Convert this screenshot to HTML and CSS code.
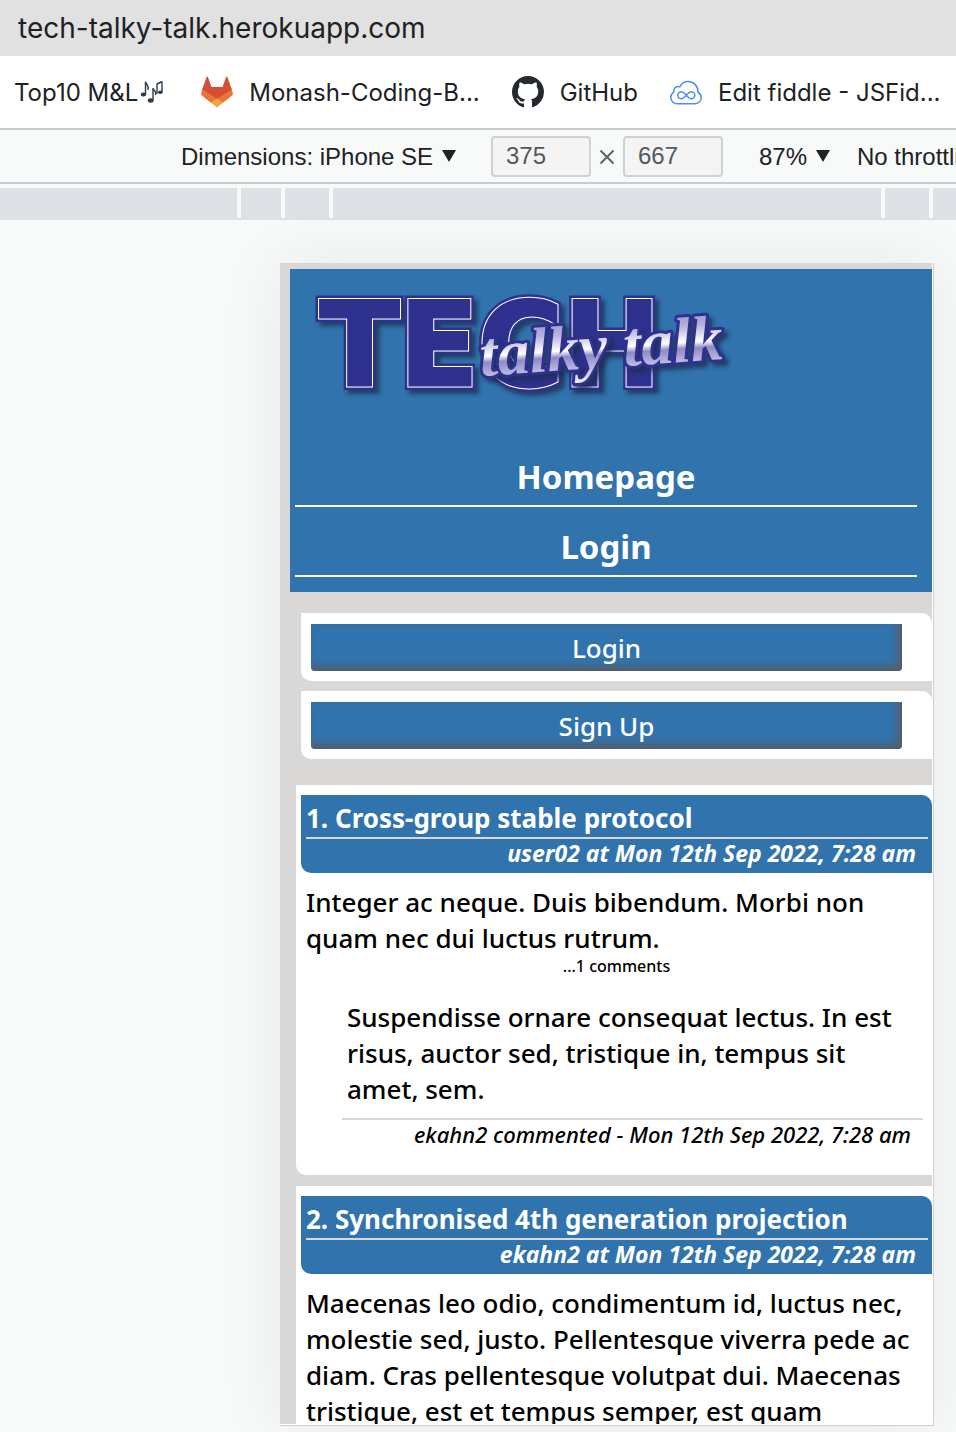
FILE: index.html
```html
<!DOCTYPE html>
<html lang="en">
<head>
<meta charset="utf-8">
<title>Tech Talky Talk</title>
<link rel="stylesheet" href="styles.css">
</head>
<body>
<div class="address-bar">
  <input class="address" type="text" value="tech-talky-talk.herokuapp.com" aria-label="Address">
</div>

<nav class="bookmarks" aria-label="Bookmarks">
  <a class="bookmark bookmark-music" href="#">Top10 M&amp;L<svg class="notes" viewBox="0 0 24 24" role="img" aria-label="Music notes">
      <g fill="none" stroke="#2c3d49" stroke-width="1.4"><path d="M5.500 14V1.500C6 5 9.500 5 8 10M13 20V8C13.500 11 17 11 15.500 15M22 12V1.500M17 14V4L22 1.500"/></g>
      <g fill="#2c3d49"><ellipse cx="3.500" cy="14.500" rx="2.700" ry="2.100"/><ellipse cx="10.700" cy="20.500" rx="2.900" ry="2.200"/><ellipse cx="20.300" cy="12.300" rx="2.300" ry="1.800"/></g>
    </svg></a>
  <a class="bookmark" href="#">
    <svg class="mark" viewBox="0 0 32 32" aria-hidden="true">
      <path fill="#eb7338" d="M1.800 12 0.200 17c-.3.900 0 2 .8 2.600L10 26.800 16 22l6 4.800 9-7.200c.8-.6 1.100-1.700.8-2.600L30.200 12z"/>
      <path fill="#d35036" d="M1.200 13.500 5.500 1.200c.3-.8 1.200-.8 1.500 0L10.500 11h11L25 1.200c.3-.8 1.200-.8 1.500 0L30.800 13.500 16 23z"/>
      <path fill="#eb7338" d="M1 13.800 11 19.500 16 23.500 21 19.500 31 13.800 28 22 16 30 4 22z"/>
      <path fill="#f0a541" d="M9.800 26.600 16 22.500l6.200 4.100L16 31.400z"/>
    </svg>Monash-Coding-B...</a>
  <a class="bookmark" href="#">
    <svg class="mark" viewBox="0 0 16 16" aria-hidden="true"><path fill="#24292f" d="M8 0C3.580 0 0 3.580 0 8c0 3.540 2.290 6.530 5.470 7.590.4.070.55-.17.55-.38 0-.19-.01-.82-.01-1.490-2.010.37-2.530-.49-2.690-.94-.09-.23-.48-.94-.82-1.130-.28-.15-.68-.52-.01-.53.63-.01 1.080.58 1.230.82.72 1.210 1.870.87 2.330.66.07-.52.28-.87.51-1.070-1.780-.2-3.640-.89-3.640-3.950 0-.87.31-1.590.82-2.150-.08-.2-.36-1.020.08-2.120 0 0 .67-.21 2.200.82.64-.18 1.320-.27 2-.27s1.360.09 2 .27c1.530-1.040 2.200-.82 2.200-.82.44 1.100.16 1.920.08 2.120.51.56.82 1.270.82 2.150 0 3.070-1.870 3.750-3.650 3.950.29.25.54.73.54 1.480 0 1.070-.01 1.930-.01 2.200 0 .21.15.46.55.38A8.010 8.010 0 0 0 16 8c0-4.420-3.580-8-8-8z"/></svg>GitHub</a>
  <a class="bookmark" href="#">
    <svg class="mark" viewBox="0 0 32 32" fill="none" stroke="#4a90f0" stroke-width="1.500" aria-hidden="true">
      <path d="M7.500 27.800C3.800 27.800.8 25 .8 21.500c0-2.400 1.200-4.300 3-5.300-.8-3.900 2.300-6.500 6-5.300C11.500 7.500 14.600 5.500 18 5.500c5.500 0 10 4.300 10 10v1c2 1 3.200 2.900 3.200 5.200 0 3.400-2.800 6.100-6.400 6.100z"/>
      <path d="M16.300 19.300c-2-2.200-3.200-3.500-5-3.500a3.500 3.500 0 0 0 0 7c1.800 0 3-1.300 5-3.500s3.200-3.500 5-3.500a3.500 3.500 0 0 1 0 7c-1.800 0-3-1.300-5-3.500z"/>
    </svg>Edit fiddle - JSFid...</a>
</nav>

<div class="toolbar">
  <span class="picker">
    <select aria-label="Device"><option>Dimensions: iPhone SE</option></select>
    <svg class="arrow" viewBox="0 0 14 12" aria-hidden="true"><path d="M0 0h14L7 12z"/></svg>
  </span>
  <span class="size">
    <input type="text" value="375" aria-label="Width">
    <svg class="times" viewBox="0 0 16 16" aria-hidden="true"><path d="M1.500 2.500l13 13M14.500 2.500l-13 13"/></svg>
    <input type="text" value="667" aria-label="Height">
  </span>
  <span class="picker">
    <select aria-label="Zoom"><option>87%</option></select>
    <svg class="arrow" viewBox="0 0 14 12" aria-hidden="true"><path d="M0 0h14L7 12z"/></svg>
  </span>
  <select class="throttle" aria-label="Throttling"><option>No throttling</option></select>
</div>

<div class="ruler" aria-hidden="true">
  <i class="wide-left"></i><i class="step-small"></i><i class="step"></i><i class="middle"></i><i class="step"></i><i class="rest"></i>
</div>

<div class="canvas">
  <div class="device">
    <div class="screen">
      <header class="site-header">
        <svg class="logo" viewBox="0 0 430 120" role="img" aria-label="Tech Talky Talk">
          <defs>
            <linearGradient id="chrome" x1="0" y1="0" x2="0" y2="1">
              <stop offset="0" stop-color="#8d87c4"/><stop offset=".3" stop-color="#b5b1dc"/>
              <stop offset=".53" stop-color="#fff"/><stop offset=".62" stop-color="#8f89c6"/>
              <stop offset="1" stop-color="#f1f0fa"/>
            </linearGradient>
            <filter id="drop" x="-10%" y="-20%" width="120%" height="150%">
              <feDropShadow dx="4" dy="4" stdDeviation="2" flood-color="#1c2f50" flood-opacity=".75"/>
            </filter>
            <text id="tech" x="9" y="101">TECH</text>
            <text id="talky" x="170" y="92" transform="rotate(-4 170 92)">talky talk</text>
          </defs>
          <g class="block" filter="url(#drop)">
            <use href="#tech" class="block-edge"/>
            <use href="#tech" class="block-line"/>
            <use href="#tech" class="block-face"/>
          </g>
          <g class="script" filter="url(#drop)">
            <use href="#talky" class="script-edge"/>
            <use href="#talky" class="script-face"/>
          </g>
        </svg>
        <nav class="site-nav">
          <a href="#">Homepage</a>
          <a href="#">Login</a>
        </nav>
      </header>

      <div class="actions">
        <div class="action"><button type="button">Login</button></div>
        <div class="action"><button type="button">Sign Up</button></div>
      </div>

      <main class="posts">
        <article class="post">
          <header class="post-head">
            <h2>1. Cross-group stable protocol</h2>
            <p>user02 at Mon 12th Sep 2022, 7:28 am</p>
          </header>
          <p class="post-text">Integer ac neque. Duis bibendum. Morbi non<br>quam nec dui luctus rutrum.</p>
          <p class="count">...1 comments</p>
          <section class="comment">
            <p class="comment-text">Suspendisse ornare consequat lectus. In est<br>risus, auctor sed, tristique in, tempus sit<br>amet, sem.</p>
            <p class="comment-meta">ekahn2 commented - Mon 12th Sep 2022, 7:28 am</p>
          </section>
        </article>
        <article class="post">
          <header class="post-head">
            <h2>2. Synchronised 4th generation projection</h2>
            <p>ekahn2 at Mon 12th Sep 2022, 7:28 am</p>
          </header>
          <p class="post-text">Maecenas leo odio, condimentum id, luctus nec,<br>molestie sed, justo. Pellentesque viverra pede ac<br>diam. Cras pellentesque volutpat dui. Maecenas<br>tristique, est et tempus semper, est quam</p>
        </article>
      </main>
    </div>
  </div>
</div>
</body>
</html>
```
FILE: styles.css
```css
* { box-sizing: border-box; }

body {
  margin: 0;
  height: 100vh;
  display: flex;
  flex-direction: column;
  overflow: hidden;
  background: #f8faf9;
  color: #202124;
  font-family: "Noto Sans", sans-serif;
}

h2, p { margin: 0; }
a { color: inherit; text-decoration: none; }
svg { display: block; flex: none; }

.address-bar { flex: none; height: 56px; padding: 0 18px; background: #e1e1e1; }
.address {
  width: 100%;
  height: 56px;
  padding: 0;
  border: 0;
  background: none;
  color: #202124;
  font: 28px Inter, sans-serif;
}

.bookmarks {
  flex: none;
  display: flex;
  align-items: center;
  gap: 32px;
  height: 74px;
  padding-left: 14px;
  overflow: hidden;
  background: #fff;
  border-bottom: 2px solid #c9cccf;
  font: 24px Inter, sans-serif;
  white-space: nowrap;
}
.bookmark { display: flex; align-items: center; gap: 16px; }
.bookmark-music { gap: 2px; margin-right: 5px; }
.mark { width: 32px; height: 32px; }
.notes { width: 24px; height: 24px; }

.toolbar {
  flex: none;
  display: flex;
  align-items: center;
  height: 54px;
  padding-left: 181px;
  overflow: hidden;
  border-bottom: 2px solid #c9cccf;
  white-space: nowrap;
}
.toolbar select, .toolbar input { font: 24px "Liberation Sans", sans-serif; }
.toolbar select {
  appearance: none;
  flex: none;
  padding: 0;
  border: 0;
  background: none;
  color: #202124;
}
.toolbar input {
  width: 100px;
  height: 41px;
  padding: 0 13px;
  border: 2px solid #cfd2d1;
  border-radius: 4px;
  background: #f4f4f4;
  color: #55585a;
}
.picker { display: flex; flex: none; align-items: center; gap: 8px; margin-right: 35px; }
.picker + .throttle { margin-left: -8px; }
.arrow { width: 14px; height: 12px; fill: #202124; }
.size { display: flex; flex: none; align-items: center; gap: 8px; margin-right: 36px; }
.times { width: 16px; height: 16px; overflow: visible; stroke: #5f6368; stroke-width: 2; }

.ruler {
  flex: none;
  display: flex;
  gap: 4px;
  height: 32px;
  margin-top: 4px;
  border-bottom: 2px solid #dfe0e5;
}
.ruler i { flex: none; background: #dfe0e5; }
.wide-left { width: 237px; }
.step-small { width: 40px; }
.step { width: 44px; }
.middle { width: 548px; }
.ruler .rest { flex: 1; }

.canvas {
  flex: 1;
  display: flex;
  min-height: 0;
  padding: 43px 22px 6px 280px;
}
.device {
  flex: 1;
  min-width: 0;
  overflow: hidden;
  padding: 0 1px 1px 0;
  background: #fff;
  border: solid #d0d1d3;
  border-width: 0 1px 1px 0;
  box-shadow: 0 0 60px rgba(0, 0, 0, .07);
}
.screen { height: 100%; overflow: hidden; padding: 6px 0 0 10px; background: #d9d8d6; color: #000; }

.site-header { padding: 15px 15px 15px 5px; background: #3173ad; }
.logo { width: 430px; height: 120px; margin-left: 16px; }
.block { font: bold 116px "DejaVu Sans", sans-serif; }
.script { font: italic bold 64px "Liberation Serif", serif; }
.block-edge { fill: #2e308e; stroke: #2e308e; stroke-width: 10px; }
.block-line { fill: #fff; stroke: #fff; stroke-width: 5px; }
.block-face { fill: #2e308e; stroke: #2e308e; stroke-width: 3px; }
.script-edge { fill: #2e308e; stroke: #2e308e; stroke-width: 6px; stroke-linejoin: round; }
.script-face { fill: url(#chrome); }

.site-nav { margin-top: 33px; }
.site-nav a {
  display: block;
  height: 70px;
  padding-top: 12px;
  border-bottom: 2px solid #fff;
  color: #fff;
  font-size: 33px;
  font-weight: 700;
  line-height: 56px;
  text-align: center;
}

.actions { display: grid; gap: 10px; margin: 21px 0 26px 11px; }
.action { padding: 11px 30px 10px 10px; background: #fff; border-radius: 0 10px 0 10px; }
.action button {
  display: block;
  width: 100%;
  height: 47px;
  padding: 0;
  border: 0;
  border-radius: 0 0 4px 4px;
  background: #3173ad;
  box-shadow: inset -4px -4px 8px #5b5b5f;
  color: #fff;
  font: 500 26px/46px "Noto Sans", sans-serif;
}

.posts { display: grid; gap: 11px; padding-left: 6px; }
.post { padding: 10px 0 27px 5px; background: #fff; border-radius: 0 0 0 10px; }
.post-head {
  height: 78px;
  padding: 0 4px 0 5px;
  background: #3173ad;
  border-radius: 0 10px 0 10px;
  color: #fff;
}
.post-head h2 {
  height: 44px;
  border-bottom: 2px solid #d9d8d6;
  font-size: 26px;
  line-height: 46px;
  white-space: nowrap;
}
.post-head p {
  padding-right: 12px;
  font-size: 23px;
  font-style: italic;
  font-weight: 700;
  line-height: 28px;
  text-align: right;
}
.post-text, .comment-text { font-size: 26px; font-weight: 500; line-height: 36px; white-space: nowrap; }
.post-text { padding: 11px 0 0 5px; }
.count { font-size: 16px; font-weight: 500; line-height: 21px; text-align: center; }
.comment { margin: 22px 9px 0 41px; }
.comment-text { padding: 0 0 11px 5px; border-bottom: 2px solid #d9d8d6; }
.comment-meta {
  padding-right: 12px;
  font-size: 22px;
  font-style: italic;
  font-weight: 500;
  line-height: 28px;
  text-align: right;
}
```
